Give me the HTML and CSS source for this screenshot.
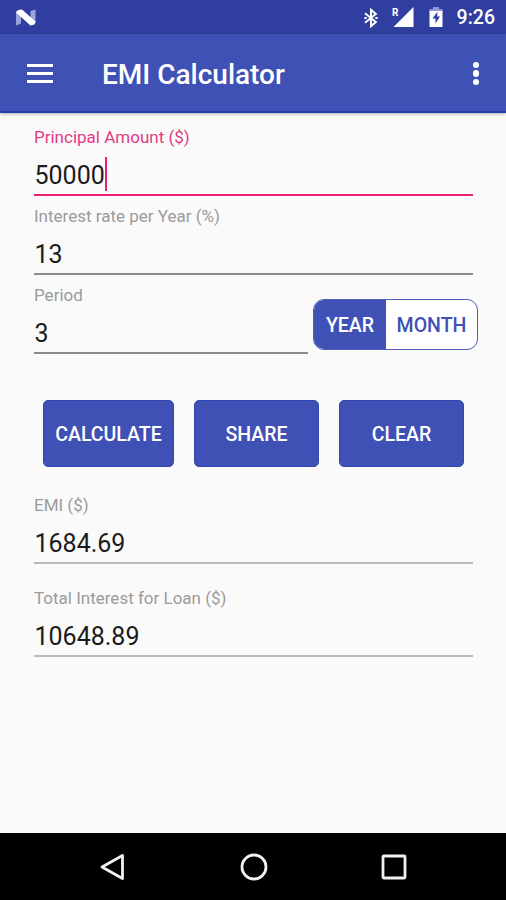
FILE: index.html
```html
<!DOCTYPE html>
<html lang="en">
<head>
<meta charset="utf-8">
<title>EMI Calculator</title>
<link rel="stylesheet" href="styles.css">
</head>
<body>
<div class="phone">
  <div class="status-bar">
    <svg class="n-icon" width="22" height="18" viewBox="0 0 22 18">
      <path d="M1 2.5 6 0.5v14L1 16.500z M15.500 2 20.500 0.500v13.500L15.500 16.500z" fill="#9aa3dc"/>
      <path d="M1 3.500 3 1 7 .5 20.500 12.500 19.500 15.500 15.500 16.500z" fill="#fff"/>
    </svg>
    <div class="status-icons">
      <svg width="14" height="20" viewBox="0 0 14 20" fill="none" stroke="#fff" stroke-width="2">
        <path d="M1 5.300 11.800 14 7 18.200V1.800L11.800 6 1 14.700"/>
        <path d="M.3 10h2.400M11.300 10h2.400"/>
      </svg>
      <svg class="signal" width="22" height="21" viewBox="0 0 22 21">
        <path d="M21.500 0v20H1.500z" fill="#fff"/>
        <text class="roaming" x="0" y="9">R</text>
      </svg>
      <svg class="battery" width="14" height="21" viewBox="0 0 14 21">
        <path d="M4 0h6v2h3.500v4H.500V2H4z" fill="#8f99d8"/>
        <path d="M.5 4h13v16H.5z" fill="#fff"/>
        <path d="M8.600 4.500 3.500 11.500h3v5l4.500-7H8.100z" fill="#303f9f"/>
      </svg>
      <span class="clock">9:26</span>
    </div>
  </div>
  <header class="app-bar">
    <div class="menu"><span></span><span></span><span></span></div>
    <h1>EMI Calculator</h1>
    <div class="more"><span></span><span></span><span></span></div>
  </header>
  <main>
    <section class="field active">
      <label>Principal Amount ($)</label>
      <div class="value">50000<span class="caret"></span></div>
    </section>
    <section class="field">
      <label>Interest rate per Year (%)</label>
      <div class="value">13</div>
    </section>
    <div class="period-row">
      <section class="field period">
        <label>Period</label>
        <div class="value">3</div>
      </section>
      <div class="toggle"><span class="on">YEAR</span><span class="off">MONTH</span></div>
    </div>
    <div class="buttons">
      <button class="calculate">CALCULATE</button>
      <button>SHARE</button>
      <button>CLEAR</button>
    </div>
    <section class="field result">
      <label>EMI ($)</label>
      <div class="value">1684.69</div>
    </section>
    <section class="field result">
      <label>Total Interest for Loan ($)</label>
      <div class="value">10648.89</div>
    </section>
  </main>
  <nav class="nav-bar">
    <svg width="28" height="30" viewBox="0 0 28 30"><path d="M3 15 23.500 3.500v23z"/></svg>
    <svg width="30" height="30" viewBox="0 0 30 30"><circle cx="15" cy="15" r="12"/></svg>
    <svg width="28" height="30" viewBox="0 0 28 30"><rect x="3" y="4" width="22" height="22" rx="1"/></svg>
  </nav>
</div>
</body>
</html>
```

FILE: styles.css
```css
* { box-sizing: border-box; }
body { margin: 0; background: #fafafa; font-family: Roboto, "Liberation Sans", sans-serif; }
.phone { width: 506px; height: 900px; display: flex; flex-direction: column; overflow: hidden; }

.status-bar { height: 34px; flex: none; background: #303f9f; display: flex; align-items: center; justify-content: space-between; padding: 1px 11px 0 15px; }
.status-icons { display: flex; align-items: center; }
.signal { margin-left: 14px; overflow: visible; }
.battery { margin-left: 15px; }
.roaming { font-size: 10px; font-weight: 700; fill: #fff; }
.clock { margin-left: 14px; padding-top: 1px; font-size: 19.500px; font-weight: 500; line-height: 34px; color: #fff; }

.app-bar { height: 79px; flex: none; background: #3f51b5; border-bottom: 2px solid #2440a6; box-shadow: 0 1px 3px rgba(0, 0, 0, .3); display: flex; align-items: center; padding: 2px 27px 0 27px; color: #fff; }
.menu { width: 26px; display: grid; gap: 5px; }
.menu span { height: 3px; background: #fff; }
h1 { flex: 1; margin: 2px 0 0 49px; font-size: 28px; line-height: 36px; font-weight: 500; }
.more { display: grid; gap: 2px; }
.more span { width: 6.500px; height: 6.500px; border-radius: 50%; background: #fff; }

main { flex: 1; padding: 12px 33px 0 34px; }
.field { height: 71px; margin-bottom: 8px; color: #9b9b9b; }
.field label { display: block; height: 31px; font-size: 17px; line-height: 24px; }
.value { height: 40px; padding-left: .5px; border-bottom: 2px solid #8c8c8c; color: #1c1c1c; font-size: 25px; line-height: 40px; display: flex; }
.active { color: #e33a83; }
.active .value { border-bottom-color: #e91e73; }
.caret { width: 2px; height: 34px; margin-top: 1px; background: #e91e73; }
.period-row { display: flex; align-items: flex-start; margin-right: -6px; }
.period { width: 274px; margin-right: 5px; }
.toggle { display: flex; width: 165px; height: 51px; margin-top: 16px; border: 1.500px solid #4d5ebb; border-radius: 11px; overflow: hidden; font-size: 19.500px; font-weight: 500; line-height: 52px; text-align: center; color: #3f51b5; background: #fff; }
.on { width: 72px; background: #3f51b5; color: #fff; }
.off { flex: 1; }

.buttons { display: flex; justify-content: space-between; height: 67px; margin: 38px 9px 26px; }
button { width: 125px; border: 1px solid #3048b0; border-radius: 5px; background: #3f51b5; padding: 2px 0 0; color: #fff; font: 500 19.500px Roboto, "Liberation Sans", sans-serif; }
.calculate { width: 131px; }
.result { margin-bottom: 22px; }
.result .value { border-bottom-color: #bababa; }

.nav-bar { height: 67px; flex: none; background: #000; display: flex; align-items: center; justify-content: space-between; padding: 0 98px 0 99px; }
.nav-bar svg { fill: none; stroke: #f1f1f1; stroke-width: 2.800; stroke-linejoin: round; }
```
